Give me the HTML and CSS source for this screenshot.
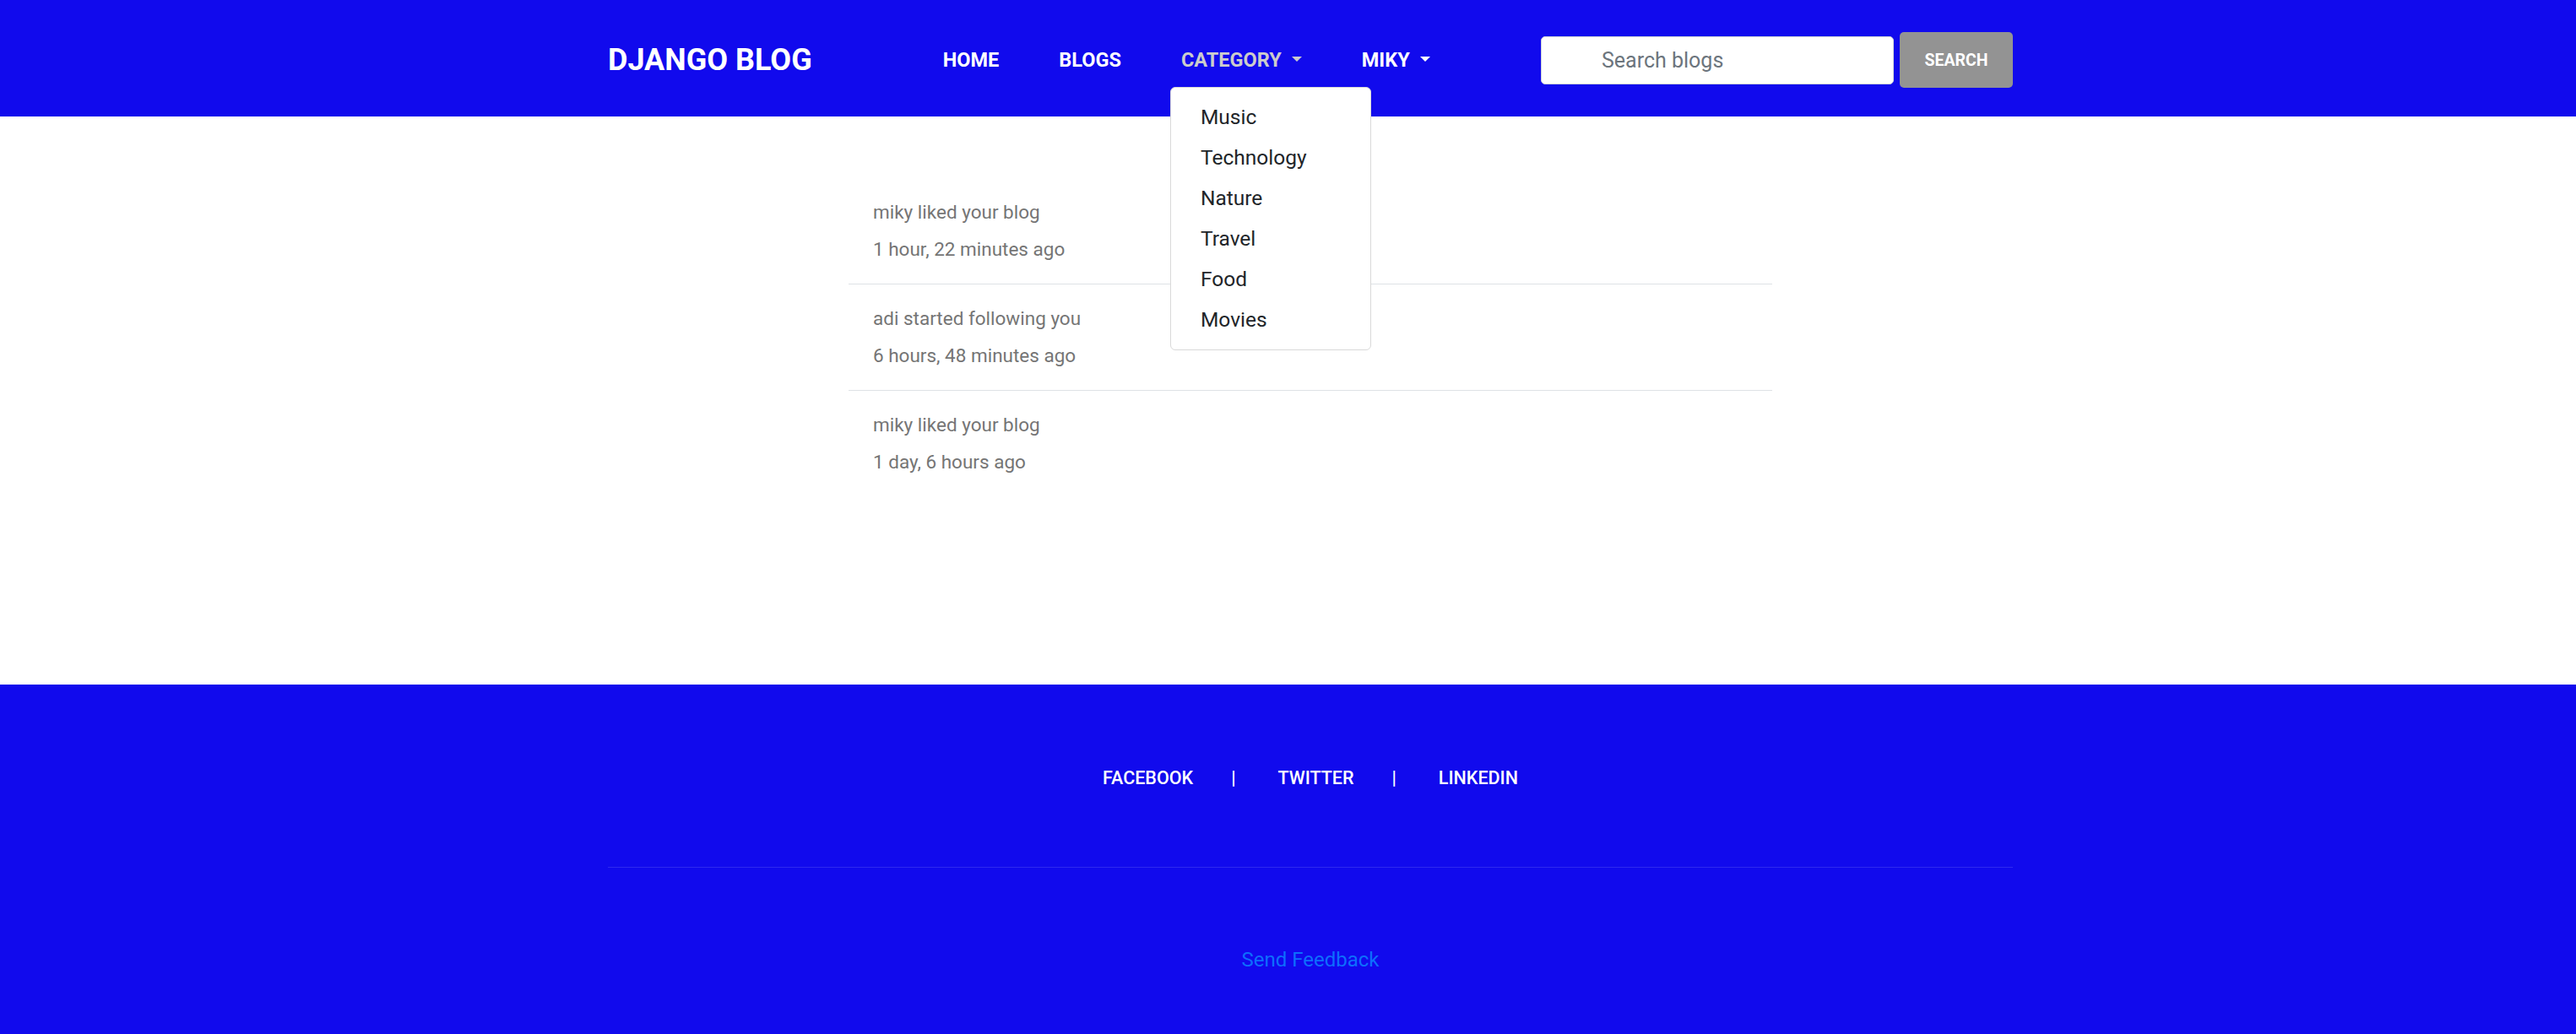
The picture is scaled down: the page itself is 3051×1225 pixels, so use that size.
FILE: index.html
```html
<!DOCTYPE html>
<html lang="en">
<head>
<meta charset="utf-8">
<title>Django Blog</title>
<link rel="stylesheet" href="styles.css">
</head>
<body>
<header class="navbar">
  <div class="container nav-inner">
    <a class="brand" href="#">DJANGO BLOG</a>
    <ul class="nav-links">
      <li class="nav-item"><a class="nav-link" href="#">HOME</a></li>
      <li class="nav-item"><a class="nav-link" href="#">BLOGS</a></li>
      <li class="nav-item">
        <a class="nav-link active dropdown-toggle" href="#">CATEGORY</a>
        <ul class="dropdown-menu">
          <li><a class="dropdown-item" href="#">Music</a></li>
          <li><a class="dropdown-item" href="#">Technology</a></li>
          <li><a class="dropdown-item" href="#">Nature</a></li>
          <li><a class="dropdown-item" href="#">Travel</a></li>
          <li><a class="dropdown-item" href="#">Food</a></li>
          <li><a class="dropdown-item" href="#">Movies</a></li>
        </ul>
      </li>
      <li class="nav-item"><a class="nav-link dropdown-toggle" href="#">MIKY</a></li>
    </ul>
    <form class="search">
      <input class="search-input" type="text" placeholder="Search blogs">
      <button class="search-btn" type="button">SEARCH</button>
    </form>
  </div>
</header>

<main class="content">
  <ul class="notifications">
    <li class="notification">
      <p class="note-text">miky liked your blog</p>
      <p class="note-time">1 hour, 22 minutes ago</p>
    </li>
    <li class="notification">
      <p class="note-text">adi started following you</p>
      <p class="note-time">6 hours, 48 minutes ago</p>
    </li>
    <li class="notification">
      <p class="note-text">miky liked your blog</p>
      <p class="note-time">1 day, 6 hours ago</p>
    </li>
  </ul>
</main>

<footer class="footer">
  <div class="container">
    <div class="social">
      <a class="social-link" href="#">FACEBOOK</a>
      <span class="social-sep">|</span>
      <a class="social-link" href="#">TWITTER</a>
      <span class="social-sep">|</span>
      <a class="social-link" href="#">LINKEDIN</a>
    </div>
    <hr class="footer-rule">
    <div class="feedback"><a class="feedback-link" href="#">Send Feedback</a></div>
  </div>
</footer>
</body>
</html>
```

FILE: styles.css
```css
* {
  box-sizing: border-box;
}

html,
body {
  margin: 0;
  padding: 0;
}

body {
  font-family: Roboto, "Noto Sans", "Liberation Sans", Arial, sans-serif;
  background: #ffffff;
  color: #212529;
}

a {
  text-decoration: none;
}

.container {
  width: 1664px;
  margin-left: calc(50% - 805.5px);
}

/* ---------- navbar ---------- */
.navbar {
  background: #110aed;
  height: 138px;
  padding-top: 4px;
}

.nav-inner {
  display: flex;
  align-items: center;
  height: 100%;
}

.brand {
  color: #ffffff;
  font-weight: 700;
  font-size: 36px;
  line-height: 1;
  white-space: nowrap;
}

.nav-links {
  display: flex;
  list-style: none;
  margin: 0 0 0 119.5px;
  padding: 0;
  align-self: stretch;
}

.nav-item {
  position: relative;
  display: flex;
  align-items: center;
}

.nav-link {
  display: block;
  color: #ffffff;
  font-weight: 700;
  font-size: 23.5px;
  line-height: 34px;
  padding: 0 35.5px;
  white-space: nowrap;
}

.nav-link.active {
  color: #cccccc;
}

.dropdown-toggle::after {
  content: "";
  display: inline-block;
  margin-left: 12px;
  vertical-align: 6px;
  border-top: 6px solid currentColor;
  border-left: 6px solid transparent;
  border-right: 6px solid transparent;
}

.dropdown-menu {
  position: absolute;
  top: 99px;
  left: 22.5px;
  width: 238px;
  margin: 0;
  padding: 11px 0;
  list-style: none;
  background: #ffffff;
  border: 1px solid #d9d9d9;
  border-radius: 6px;
  z-index: 10;
}

.dropdown-item {
  display: block;
  padding: 0 35px;
  font-size: 24.5px;
  line-height: 48px;
  color: #212529;
  white-space: nowrap;
}

.search {
  display: flex;
  align-items: center;
  margin: 0 0 0 auto;
}

.search-input {
  width: 418px;
  height: 57px;
  padding: 0 12px 0 71px;
  border: 1px solid #ced4da;
  border-radius: 5px;
  background: #ffffff;
  font-family: inherit;
  font-size: 25px;
  color: #495057;
  outline: none;
}

.search-input::placeholder {
  color: #6c757d;
}

.search-btn {
  margin-left: 7px;
  width: 134px;
  height: 66px;
  border: none;
  border-radius: 5px;
  background: #939393;
  color: #ffffff;
  font-family: inherit;
  font-weight: 700;
  font-size: 19.5px;
  padding: 0;
}

/* ---------- notifications ---------- */
.content {
  height: 673px;
  padding-top: 73px;
}

.notifications {
  width: 1094px;
  margin: 0 0 0 calc(50% - 520.5px);
  padding: 0;
  list-style: none;
}

.notification {
  padding: 21.5px 0 23.5px 29px;
  border-bottom: 1px solid #dee2e6;
}

.notification:last-child {
  border-bottom: none;
}

.note-text,
.note-time {
  margin: 0;
  font-size: 22.5px;
  line-height: 36px;
  color: #757575;
}

.note-time {
  margin-top: 8px;
}

/* ---------- footer ---------- */
.footer {
  background: #110aed;
  height: 414px;
  padding-top: 94px;
}

.social {
  display: flex;
  justify-content: center;
  font-size: 21.5px;
  line-height: 34px;
  font-weight: 500;
}

.social-link,
.social-sep {
  color: #ffffff;
}

.social-sep {
  margin: 0 50px 0 45px;
}

.footer-rule {
  margin: 88px 0 0;
  border: none;
  border-top: 1px solid rgba(255, 255, 255, 0.13);
  height: 0;
}

.feedback {
  margin-top: 91px;
  text-align: center;
  font-size: 24px;
  line-height: 36px;
}

.feedback-link {
  color: #0d6efd;
}
```
